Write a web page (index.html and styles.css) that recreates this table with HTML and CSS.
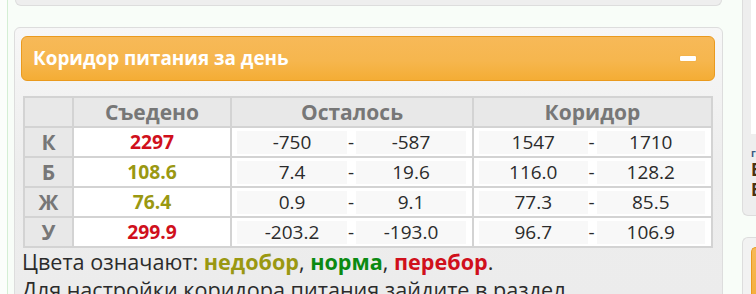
FILE: index.html
```html
<!DOCTYPE html>
<html lang="ru">
<head>
<meta charset="utf-8">
<title>Коридор питания</title>
<link rel="stylesheet" href="styles.css">
</head>
<body>
<div class="page">
  <div class="left-strip"></div>
  <div class="main">
    <div class="prev-box"></div>
    <div class="panel">
      <div class="panel-head">
        <span class="title">Коридор питания за день</span>
        <span class="minus"></span>
      </div>
      <table class="corridor">
        <colgroup>
          <col class="c-label"><col class="c-eaten"><col class="c-left"><col class="c-range">
        </colgroup>
        <tr class="head-row">
          <th></th><th>Съедено</th><th>Осталось</th><th>Коридор</th>
        </tr>
        <tr>
          <td class="label">К</td>
          <td class="eaten over">2297</td>
          <td class="range"><div class="pair"><span class="box">-750</span><span class="dash">-</span><span class="box">-587</span></div></td>
          <td class="range"><div class="pair"><span class="box">1547</span><span class="dash">-</span><span class="box">1710</span></div></td>
        </tr>
        <tr>
          <td class="label">Б</td>
          <td class="eaten under">108.6</td>
          <td class="range"><div class="pair"><span class="box">7.4</span><span class="dash">-</span><span class="box">19.6</span></div></td>
          <td class="range"><div class="pair"><span class="box">116.0</span><span class="dash">-</span><span class="box">128.2</span></div></td>
        </tr>
        <tr>
          <td class="label">Ж</td>
          <td class="eaten under">76.4</td>
          <td class="range"><div class="pair"><span class="box">0.9</span><span class="dash">-</span><span class="box">9.1</span></div></td>
          <td class="range"><div class="pair"><span class="box">77.3</span><span class="dash">-</span><span class="box">85.5</span></div></td>
        </tr>
        <tr>
          <td class="label">У</td>
          <td class="eaten over">299.9</td>
          <td class="range"><div class="pair"><span class="box">-203.2</span><span class="dash">-</span><span class="box">-193.0</span></div></td>
          <td class="range"><div class="pair"><span class="box">96.7</span><span class="dash">-</span><span class="box">106.9</span></div></td>
        </tr>
      </table>
      <p class="legend">Цвета означают: <b class="under">недобор</b>, <b class="norm">норма</b>, <b class="over">перебор</b>.</p>
      <p class="legend">Для настройки коридора питания зайдите в раздел</p>
    </div>
  </div>
  <div class="side">
    <div class="side-panel">
      <div class="side-white"></div>
      <div class="side-text">
        <div class="side-small">г</div>
        <div class="side-line">Б</div>
        <div class="side-line">Б</div>
      </div>
    </div>
    <div class="side-panel2">
      <div class="side-head"></div>
    </div>
  </div>
</div>
</body>
</html>
```

FILE: styles.css
```css
html, body {
  margin: 0;
  padding: 0;
  background: #f8fdf8;
  font-family: "Open Sans", "Noto Sans", sans-serif;
  color: #2b2b2b;
}

.page {
  display: flex;
  height: 294px;
  overflow: hidden;
}

.left-strip {
  width: 7px;
  flex: none;
  background: #fbfefb;
  border-right: 1px solid #d4efd4;
}

.main {
  width: 709px;
  flex: none;
  margin-left: 6px;
}

.prev-box {
  height: 5px;
  margin: 0 1px 21px;
  background: #eeeeee;
  border: 1px solid #dddddd;
  border-top: none;
  border-radius: 0 0 6px 6px;
}

.panel {
  border: 1px solid #dddddd;
  border-radius: 6px;
  padding: 8px 7px 0 6px;
  height: 400px;
  background: linear-gradient(#f7f7f7, #ededed 140px, #ebebeb);
}

.panel-head {
  height: 43px;
  border: 1px solid #ea9a1e;
  border-radius: 6px;
  background: linear-gradient(#f7b958, #f6b64e 55%, #f4ad35);
  display: flex;
  align-items: center;
  justify-content: space-between;
  padding: 0 18px 0 11px;
  margin-bottom: 15px;
}

.title {
  color: #ffffff;
  font-weight: bold;
  font-size: 18.9px;
  margin-top: -2px;
}

.minus {
  width: 16px;
  height: 5px;
  background: #ffffff;
  border-radius: 1px;
  box-shadow: 0 0 1px rgba(200, 120, 0, 0.6);
}

.corridor {
  border-collapse: collapse;
  table-layout: fixed;
  width: 690px;
  margin: 0 2px;
  border: 2px solid #cfcfcf;
}

.c-label { width: 49px; }
.c-eaten { width: 158px; }
.c-left { width: 242px; }
.c-range { width: 239px; }

.corridor th,
.corridor td {
  border: 2px solid #d3d3d3;
  height: 28px;
  padding: 0;
  text-align: center;
  font-size: 19px;
  line-height: 26px;
}

.corridor th {
  background: #e8e8e8;
  color: #777777;
  font-weight: bold;
  font-size: 21px;
}

.corridor td.label {
  background: #e8e8e8;
  color: #777777;
  font-weight: bold;
  font-size: 21px;
}

.corridor td.eaten {
  background: #ffffff;
  font-weight: bold;
  font-size: 19.3px;
}

.corridor td.range {
  background: #ffffff;
  padding: 0 6px 0 5px;
}

.pair {
  display: flex;
  align-items: center;
}

.box {
  flex: 1;
  height: 23px;
  line-height: 23px;
  background: #f8f8f8;
  text-align: center;
}

.dash {
  width: 8px;
  text-align: left;
  padding-left: 1px;
}

.over { color: #d0101c; }
.under { color: #9a9812; }
.norm { color: #0b8a12; }

.legend {
  margin: 0;
  padding-left: 1px;
  font-size: 21.6px;
  line-height: 28px;
  color: #2b2b2b;
  white-space: nowrap;
}

.side {
  margin-left: 19px;
  flex: 1;
  min-width: 0;
}

.side-panel {
  margin-top: -10px;
  height: 226px;
  box-sizing: border-box;
  background: #eeeeee;
  border: 1px solid #dddddd;
  border-right: none;
  border-radius: 0 0 0 6px;
  padding-left: 8px;
  overflow: hidden;
}

.side-white {
  height: 143px;
  background: #ffffff;
}

.side-text {
  padding-top: 12px;
  color: #4a3312;
  font-weight: bold;
}

.side-small {
  font-size: 10px;
  line-height: 14px;
  color: #3a5a80;
}

.side-line {
  font-size: 17px;
  line-height: 20px;
}

.side-panel2 {
  margin-top: 21px;
  height: 80px;
  background: #f2f2f2;
  border: 1px solid #dddddd;
  border-right: none;
  border-radius: 6px 0 0 0;
  padding: 9px 0 0 8px;
}

.side-head {
  height: 60px;
  background: linear-gradient(#f7b958, #f4ad35);
  border: 1px solid #ea9a1e;
  border-right: none;
  border-radius: 6px 0 0 6px;
}
```
